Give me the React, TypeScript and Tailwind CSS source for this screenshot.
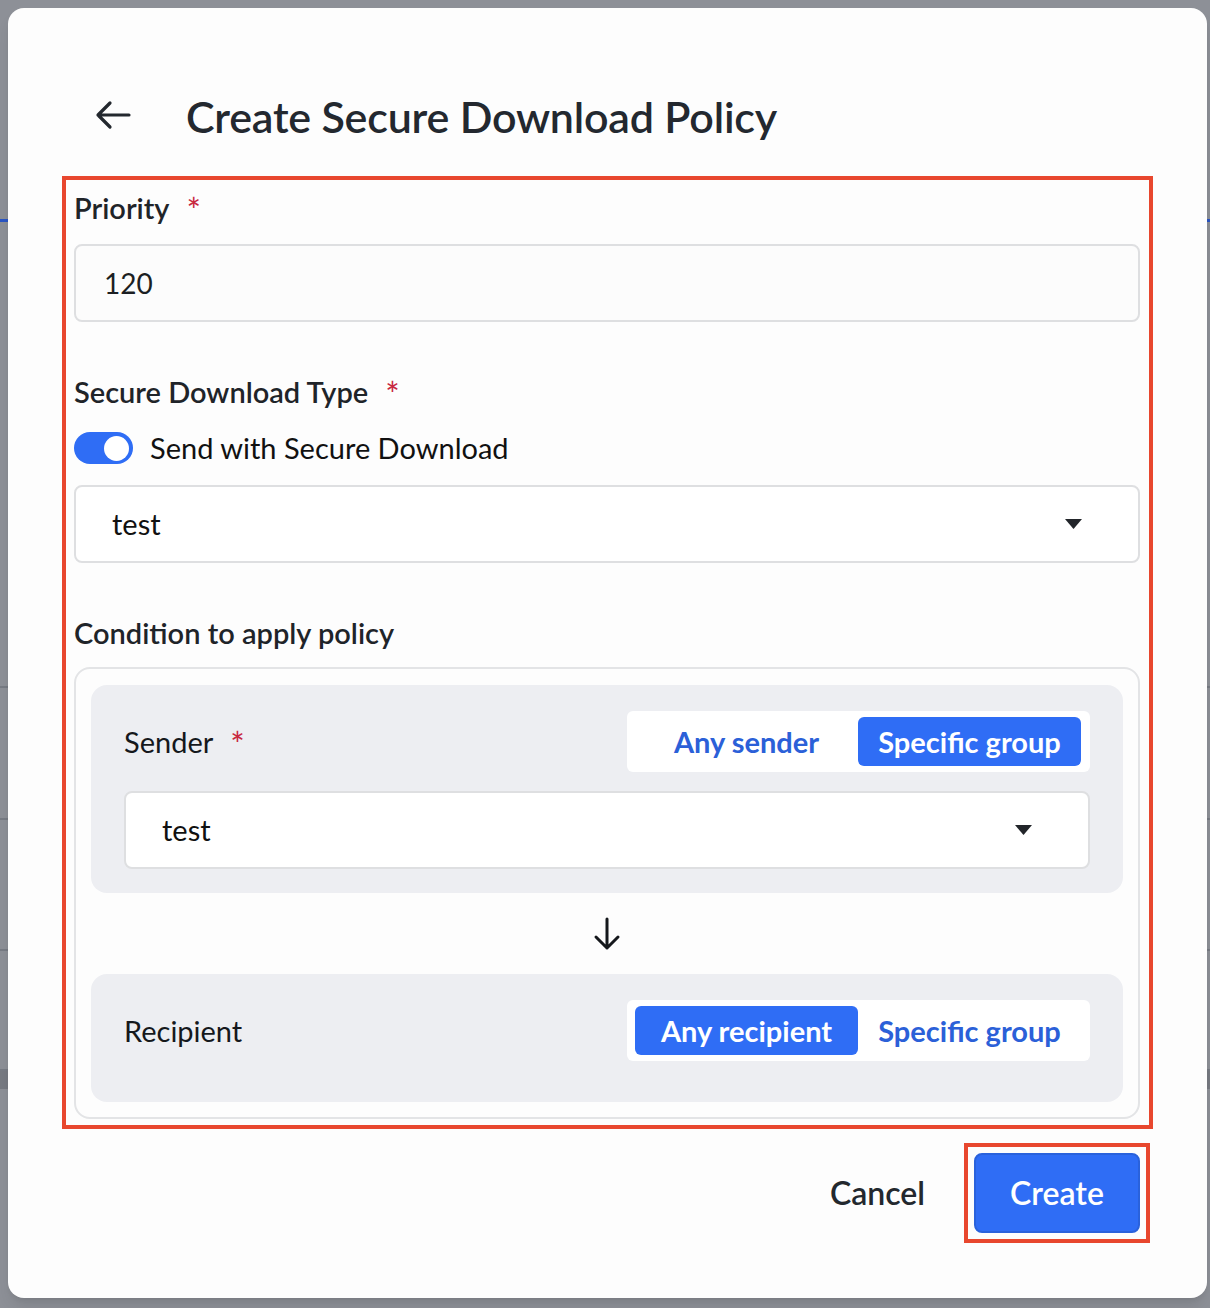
import { useState } from "react";

const font = { fontFamily: "Lato, 'Noto Sans', sans-serif" };

function Caret() {
  return (
    <svg width="17" height="10" viewBox="0 0 17 10" className="shrink-0">
      <path d="M0 0h17L8.5 10z" fill="#22252a" />
    </svg>
  );
}

function Required() {
  return (
    <span className="ml-[17px] text-[34px] leading-none font-normal text-[#c8283f] relative top-[2px]">*</span>
  );
}

function Segmented({
  options,
  value,
  onChange,
}: {
  options: string[];
  value: number;
  onChange: (i: number) => void;
}) {
  return (
    <div className="flex rounded-[6px] bg-white pl-[8px] pr-[9px] py-[6px]">
      {options.map((opt, i) => (
        <button
          key={opt}
          onClick={() => onChange(i)}
          className={
            "w-[223px] h-[49px] rounded-[6px] text-[29px] font-bold flex items-center justify-center " +
            (i === value ? "bg-[#2f6df5] text-white" : "text-[#2b60d8]")
          }
        >
          {opt}
        </button>
      ))}
    </div>
  );
}

function SelectBox({ value, className }: { value: string; className?: string }) {
  return (
    <div
      className={
        "h-[78px] rounded-[8px] border-2 border-[#dedfe1] bg-white flex items-center justify-between pr-[56px] " +
        (className ?? "")
      }
    >
      <span className="text-[29px] text-[#111]">{value}</span>
      <Caret />
    </div>
  );
}

export default function App() {
  const [secure, setSecure] = useState(true);
  const [sender, setSender] = useState(1);
  const [recipient, setRecipient] = useState(0);

  return (
    <div className="relative h-[1308px] w-[1210px] overflow-hidden bg-[#8d9097]" style={font}>
      {/* dimmed page behind the dialog */}
      <div className="flex flex-col">
        <div className="h-[222px] border-b-[3px] border-[#2a55c4]" />
        <div className="h-[466px] border-b-2 border-[#777b84]" />
        <div className="h-[132px] border-b-2 border-[#777b84]" />
        <div className="h-[131px] border-b-2 border-[#777b84]" />
        <div className="h-[120px] border-b-2 border-[#777b84]" />
        <div className="h-[18px] bg-[#777a82]" />
      </div>

      {/* dialog */}
      <div className="absolute left-[8px] top-[8px] w-[1199px] h-[1290px] rounded-[16px] bg-[#fdfdfd] shadow-lg flex flex-col">
        <div className="flex items-center h-[168px] pt-[50px] pl-[87px]">
          <svg width="36" height="30" viewBox="0 0 36 30" fill="none" className="mt-[-4px]">
            <path d="M34 15H3M15 3L3 15l12 12" stroke="#23282e" strokeWidth="3.2" strokeLinecap="round" strokeLinejoin="round" />
          </svg>
          <h1 className="ml-[55px] text-[43px] font-semibold text-[#23282f] tracking-[-0.2px]">
            Create Secure Download Policy
          </h1>
        </div>

        <div className="mx-[54px] border-4 border-[#e8472e] pl-[8px] pr-[9px] pt-[8px] pb-[6px]">
          <div className="h-[40px] flex items-center text-[29px] font-semibold text-[#1f2429]">
            Priority
            <Required />
          </div>
          <div className="mt-[16px] h-[78px] rounded-[8px] border-2 border-[#dedfe1] bg-[#fcfcfc] flex items-center pl-[28px] text-[28px] text-[#1c1f23]">
            120
          </div>

          <div className="mt-[50px] h-[40px] flex items-center text-[29px] font-semibold text-[#1f2429]">
            Secure Download Type
            <Required />
          </div>
          <div className="mt-[16px] flex items-center h-[40px]">
            <button
              onClick={() => setSecure(!secure)}
              className={
                "w-[59px] h-[32px] rounded-full flex items-center px-[4px] " +
                (secure ? "bg-[#2f6df5] justify-end" : "bg-[#c4c7cc] justify-start")
              }
            >
              <span className="w-[25px] h-[25px] rounded-full bg-white" />
            </button>
            <span className="ml-[17px] text-[29px] text-[#111]">Send with Secure Download</span>
          </div>
          <SelectBox value="test" className="mt-[17px] pl-[36px]" />

          <div className="mt-[50px] h-[40px] flex items-center text-[29px] font-semibold text-[#1f2429]">
            Condition to apply policy
          </div>

          <div className="mt-[14px] rounded-[16px] border-2 border-[#e3e4e6] px-[15px] pt-[16px] pb-[15px]">
            <div className="rounded-[16px] bg-[#edeef2] px-[33px] pt-[26px] pb-[24px]">
              <div className="flex items-center justify-between">
                <div className="flex items-center text-[29px] text-[#15181c]">
                  Sender
                  <Required />
                </div>
                <Segmented options={["Any sender", "Specific group"]} value={sender} onChange={setSender} />
              </div>
              <SelectBox value="test" className="mt-[19px] pl-[36px]" />
            </div>

            <div className="h-[81px] flex items-center justify-center">
              <svg width="30" height="34" viewBox="0 0 30 34" fill="none">
                <path d="M15 2v29M4 20l11 11 11-11" stroke="#15181c" strokeWidth="3" strokeLinecap="round" strokeLinejoin="round" />
              </svg>
            </div>

            <div className="rounded-[16px] bg-[#edeef2] px-[33px] pt-[26px] pb-[41px]">
              <div className="flex items-center justify-between">
                <span className="text-[29px] text-[#15181c]">Recipient</span>
                <Segmented options={["Any recipient", "Specific group"]} value={recipient} onChange={setRecipient} />
              </div>
            </div>
          </div>
        </div>

        <div className="mt-[14px] flex items-center justify-end pr-[57px]">
          <button className="text-[32px] font-semibold text-[#23282e] mr-[39px]">Cancel</button>
          <div className="border-4 border-[#e8472e] p-[6px]">
            <button className="w-[166px] h-[80px] rounded-[8px] bg-[#2f6df5] border-2 border-[#2a62dc] text-white text-[32px] font-semibold flex items-center justify-center">
              Create
            </button>
          </div>
        </div>
      </div>
    </div>
  );
}
